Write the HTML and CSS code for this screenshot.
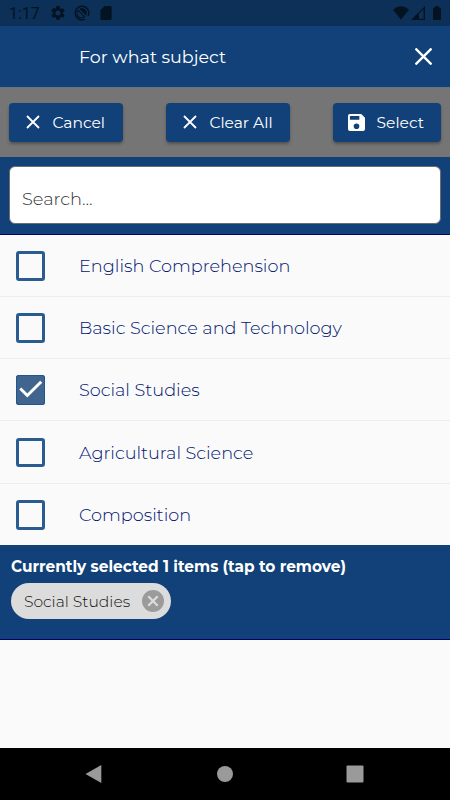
FILE: index.html
```
<!DOCTYPE html>
<html lang="en">
<head>
<meta charset="utf-8">
<title>For what subject</title>
<link rel="stylesheet" href="styles.css">
</head>
<body>
<div class="screen">
  <div class="status">
    <span class="clock">1:17</span>
    <svg class="gear" viewBox="2 2 20 20"><path d="M19.14 12.94c.04-.3.06-.61.06-.94s-.02-.64-.07-.94l2.03-1.58a.49.49 0 0 0 .12-.61l-1.92-3.32a.49.49 0 0 0-.59-.22l-2.39.96a7 7 0 0 0-1.62-.94l-.36-2.54A.48.48 0 0 0 13.92 2h-3.84a.48.48 0 0 0-.47.41l-.36 2.54c-.59.24-1.13.57-1.62.94l-2.39-.96a.49.49 0 0 0-.59.22L2.74 8.87a.48.48 0 0 0 .12.61l2.03 1.58a7 7 0 0 0 0 1.88l-2.03 1.58a.49.49 0 0 0-.12.61l1.92 3.32c.12.22.37.29.59.22l2.39-.96c.5.38 1.03.7 1.62.94l.36 2.54c.05.24.24.41.48.41h3.84c.24 0 .44-.17.47-.41l.36-2.54a7 7 0 0 0 1.62-.94l2.39.96c.22.08.47 0 .59-.22l1.92-3.32a.48.48 0 0 0-.12-.61zM12 15.6a3.6 3.6 0 1 1 0-7.2 3.6 3.6 0 0 1 0 7.2z"/></svg>
    <svg class="dnd" viewBox="0 0 16 16"><path d="M11 14.100A6.800 6.800 0 1 1 14.100 11" fill="none" stroke="currentColor" stroke-width="1.400"/><path d="M4.300 5.500A4.300 4.300 0 0 0 10.500 11.700z" fill="none" stroke="currentColor" stroke-width="1.100"/><path d="M5.500 4A4.700 4.700 0 0 1 12 10.500z"/></svg>
    <svg class="sd" viewBox="4 2 16 20"><path d="M18 2h-8L4 8v12a2 2 0 0 0 2 2h12a2 2 0 0 0 2-2V4a2 2 0 0 0-2-2z"/></svg>
    <svg class="wifi" viewBox="0 0 16 14"><path d="M0 3.700Q8-3.200 16 3.700L8 13.500z"/></svg>
    <svg class="signal" viewBox="0 0 14 14"><path fill-rule="evenodd" d="M0 14 14 0v14zM8 7.600v5.100h4.600V3z"/></svg>
    <svg class="battery" viewBox="0 0 8 14"><path d="M2.300 0h3.400v1.400H7a1 1 0 0 1 1 1V13a1 1 0 0 1-1 1H1a1 1 0 0 1-1-1V2.400a1 1 0 0 1 1-1h1.300z"/></svg>
  </div>
  <header class="header">
    <h1>For what subject</h1>
    <svg class="close" viewBox="0 0 16 16"><path d="m.5.500 15 15M15.500.500l-15 15"/></svg>
  </header>
  <div class="actions">
    <button class="btn cancel"><svg class="x" viewBox="0 0 14 14"><path d="m1 1 12 12M13 1 1 13"/></svg>Cancel</button>
    <button class="btn clear"><svg class="x" viewBox="0 0 14 14"><path d="m1 1 12 12M13 1 1 13"/></svg>Clear All</button>
    <button class="btn select"><svg class="save" viewBox="3 3 18 18"><path d="M17 3H5a2 2 0 0 0-2 2v14a2 2 0 0 0 2 2h14a2 2 0 0 0 2-2V7zm-5 16a3 3 0 1 1 0-6 3 3 0 0 1 0 6zm3-10H5V5h10z"/></svg>Select</button>
  </div>
  <div class="search"><div class="field">Search...</div></div>
  <ul class="list">
    <li><i class="box"></i><span>English Comprehension</span></li>
    <li><i class="box"></i><span>Basic Science and Technology</span></li>
    <li><i class="box on"><svg viewBox="0 0 29 29"><path d="m4.300 13.500 7 7L25.200 6.700"/></svg></i><span>Social Studies</span></li>
    <li><i class="box"></i><span>Agricultural Science</span></li>
    <li><i class="box"></i><span>Composition</span></li>
  </ul>
  <section class="selected">
    <h2>Currently selected 1 items (tap to remove)</h2>
    <div class="chip">Social Studies<svg viewBox="0 0 22 22"><circle cx="11" cy="11" r="11"/><path d="m6.300 6.300 9.400 9.400M15.700 6.300l-9.400 9.400"/></svg></div>
  </section>
  <div class="blank"></div>
  <nav class="nav">
    <svg viewBox="0 0 18 18"><path d="M.5 9 16.300.1V17.900z"/></svg>
    <svg viewBox="0 0 18 18"><circle cx="9" cy="9" r="8"/></svg>
    <svg viewBox="0 0 18 18"><rect x=".5" y=".5" width="17" height="17" rx="1"/></svg>
  </nav>
</div>
</body>
</html>
```
FILE: styles.css
```
* { box-sizing: border-box; }
body { margin: 0; font-family: Montserrat, Inter, sans-serif; font-weight: 400; }
.screen { width: 450px; height: 800px; display: flex; flex-direction: column; background: #fafafa; overflow: hidden; }
.status { height: 26px; flex: none; display: flex; align-items: center; padding: 0 9px; background: #0c3057; color: #041321; }
.status svg { fill: currentColor; flex: none; }
.clock { font: 400 16px/24px Roboto, sans-serif; width: 42px; padding-top: 2px; }
.gear { width: 14px; height: 14px; }
.dnd { width: 16px; height: 16px; margin-left: 9px; }
.sd { width: 12px; height: 14px; margin-left: 10px; }
.wifi { width: 16px; height: 14px; margin-left: auto; }
.signal { width: 14px; height: 14px; margin-left: 2px; }
.battery { width: 8px; height: 14px; margin-left: 8px; }
.header { height: 61px; flex: none; display: flex; align-items: center; justify-content: space-between; padding: 0 18px 0 79px; background: #114178; color: #fff; }
h1 { margin: 0; font-size: 17.500px; font-weight: 400; }
.close { width: 17px; height: 17px; fill: none; stroke: #fff; stroke-width: 2.200; }
.actions { height: 70px; flex: none; display: flex; justify-content: space-between; align-items: center; padding: 0 9px; background: #757575; border-top: 1px solid #667383; }
.btn { height: 39px; display: flex; align-items: center; border: 0; border-radius: 4px; background: #114178; color: #fff; padding: 0 0 1px 17px; font: 400 15.500px Montserrat, Inter, sans-serif; white-space: nowrap; box-shadow: 0 2px 3px rgba(0,0,0,.3); }
.cancel { width: 113.500px; }
.clear { width: 124.500px; padding-left: 17.500px; }
.select { width: 108px; padding-left: 15px; }
.x { width: 14px; height: 14px; flex: none; fill: none; stroke: #fff; stroke-width: 1.800; margin-right: 12.400px; }
.save { width: 17px; height: 17px; flex: none; fill: #fff; margin-right: 11.500px; }
.search { height: 78px; flex: none; background: #114178; padding: 9px 9px 0; border-bottom: 1px solid #000070; }
.field { height: 58px; border: 1px solid #6d6d6d; border-radius: 6px; background: #fff; color: #333; padding: 7px 12px 0; font-size: 17.800px; font-weight: 300; line-height: 50px; }
.list { height: 310px; flex: none; margin: 0; padding: 0; list-style: none; display: grid; grid-template-rows: 61.600px repeat(4, 62.400px); color: #001470; overflow: hidden; }
.list li { display: flex; align-items: center; padding-left: 16px; box-shadow: inset 0 -1px #ededed; font-size: 17.700px; font-weight: 300; }
.list span { padding-bottom: 1px; }
.list li:last-child { box-shadow: none; }
.box { width: 29px; height: 29.500px; border: 3px solid #2a5c91; border-radius: 3px; margin-right: 34px; }
.on { border: 0; background: #41658f; box-shadow: inset 0 0 0 1px #1d578e; }
.on svg { display: block; fill: none; stroke: #fff; stroke-width: 3; }
.selected { height: 95px; flex: none; background: #114178; color: #fff; padding: 12px 11px 0; border-bottom: 1px solid #000070; }
h2 { margin: 0 0 6px; font-size: 15.350px; line-height: 20px; font-weight: 700; }
.chip { width: 160px; height: 36px; border-radius: 18px; background: #dcdcdc; color: #111; display: flex; justify-content: space-between; align-items: center; padding: 0 7px 0 13px; font-size: 15.550px; font-weight: 300; }
.chip svg { width: 22px; height: 22px; fill: #9b9b9b; }
.chip path { stroke: #dcdcdc; stroke-width: 2.300; fill: none; }
.blank { flex: 1; }
.nav { height: 52px; flex: none; background: #000; display: flex; justify-content: space-between; align-items: center; padding: 0 86px 0 85px; }
.nav svg { width: 18px; height: 18px; fill: #9a9a9a; }
```
